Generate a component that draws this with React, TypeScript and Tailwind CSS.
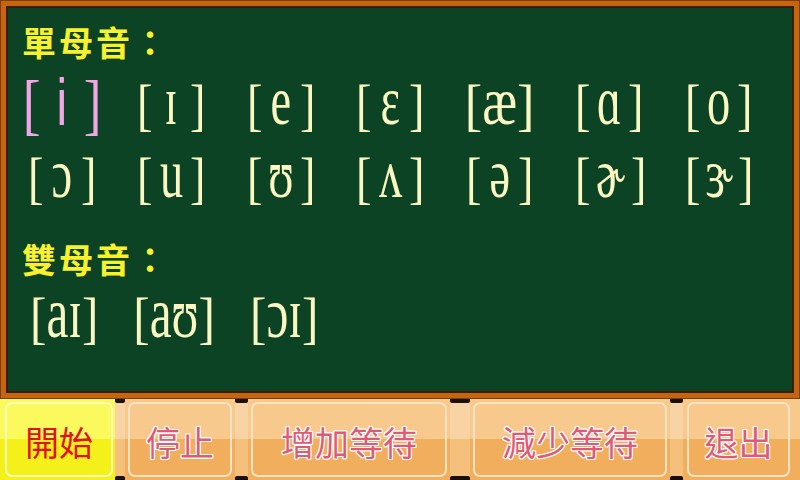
const serif = "font-['Liberation_Serif','DejaVu_Serif',serif]";

const row1 = ["ɪ", "e", "ɛ", "æ", "ɑ", "o"];
const row2 = ["ɔ", "u", "ʊ", "ʌ", "ə", "ɚ", "ɝ"];
const row3 = ["aɪ", "aʊ", "ɔɪ"];

function Sound({ ch, pink = false }: { ch: string; pink?: boolean }) {
  if (ch === "æ") {
    return (
      <div className={`w-[72px] h-[58px] flex items-center justify-center ${serif} text-[58px] leading-none text-[#fbf7c2]`}>
        <span className="scale-x-90 whitespace-nowrap">
          [<span className="inline-block scale-y-115 origin-[50%_48px]">æ</span>]
        </span>
      </div>
    );
  }
  return (
    <div
      className={`w-[72px] h-[58px] flex items-center justify-between ${serif} text-[58px] leading-none ${
        pink ? "scale-115 text-[#f2a6e6]" : "text-[#fbf7c2]"
      }`}
    >
      <span className="scale-x-80">[</span>
      <span
        className={`scale-x-80 origin-[50%_48px] ${
          pink ? "scale-y-110 font-['Liberation_Sans',sans-serif] text-[52px]" : "scale-y-120"
        }`}
      >
        {ch}
      </span>
      <span className="scale-x-80">]</span>
    </div>
  );
}

function Label({ text }: { text: string }) {
  return (
    <div className="h-[34px] text-[34px] leading-none font-bold tracking-[3px] text-[#f7f22c] font-['Noto_Sans_CJK_TC','Noto_Sans_CJK_SC',sans-serif]">
      {text}
    </div>
  );
}

function Button({ label, active = false, className }: { label: string; active?: boolean; className: string }) {
  return (
    <div
      className={`${className} h-full ${
        active
          ? "bg-[linear-gradient(#fafa5e_49%,#f4f01a_49%)]"
          : "bg-[linear-gradient(#f7c98c_49%,#f1ae5c_49%)]"
      }`}
    >
      <div
        className={`h-full rounded-[7px] border-2 flex items-center justify-center pt-[5px] text-[34px] leading-none font-['Noto_Sans_CJK_TC','Noto_Sans_CJK_SC',sans-serif] ${
          active
            ? "border-[#fdfab8] text-[#e2121c]"
            : "border-[#fde3c2] text-[#e15a74] [text-shadow:1px_0_#fff,-1px_0_#fff,0_1px_#fff,0_-1px_#fff,1px_1px_#fff,-1px_-1px_#fff,1px_-1px_#fff,-1px_1px_#fff]"
        }`}
      >
        {label}
      </div>
    </div>
  );
}

function Sep({ className }: { className: string }) {
  return (
    <div className={`${className} h-full flex flex-col justify-between bg-[linear-gradient(#f8d4a4_49%,#f4c07c_49%)]`}>
      <div className="h-[4px] bg-[#1a0f05] rounded-b-[2px]" />
      <div className="h-[4px] bg-[#1a0f05] rounded-t-[2px]" />
    </div>
  );
}

export default function App() {
  return (
    <div className="w-[800px] h-[480px] flex flex-col overflow-hidden bg-[#f6c98c]">
      <div className="h-[399px] bg-[#7d3c0b] p-px">
        <div className="h-full border-[5px] border-[#c4660f]">
          <div className="h-full border-2 border-[#3b1d06] bg-[#0c4324] pl-[14px] flex flex-col">
            <div className="mt-[17px]">
              <Label text="單母音：" />
            </div>
            <div className="mt-[17px] pl-[4px] flex">
              <div className="w-[110px]">
                <Sound ch="i" pink />
              </div>
              {row1.map((c) => (
                <div key={c} className="w-[110px]">
                  <Sound ch={c} />
                </div>
              ))}
            </div>
            <div className="mt-[15px] pl-[4px] flex">
              {row2.map((c) => (
                <div key={c} className="w-[110px]">
                  <Sound ch={c} />
                </div>
              ))}
            </div>
            <div className="mt-[35px]">
              <Label text="雙母音：" />
            </div>
            <div className="mt-[13px] pl-[6px] flex">
              {row3.map((c) => (
                <div key={c} className={`w-[110px] h-[58px] flex items-center ${serif} text-[58px] leading-none text-[#fbf7c2]`}>
                  <div className="w-[72px] flex justify-center">
                    <span className="scale-x-85 whitespace-nowrap">
                      [<span className="inline-block scale-y-125 origin-[50%_48px]">{c}</span>]
                    </span>
                  </div>
                </div>
              ))}
            </div>
          </div>
        </div>
      </div>
      <div className="h-[81px] flex">
        <Button label="開始" active className="w-[115px] py-[3px] pl-[5px] pr-[2px]" />
        <Sep className="w-[10px]" />
        <Button label="停止" className="w-[110px] p-[3px]" />
        <Sep className="w-[13px]" />
        <Button label="增加等待" className="w-[202px] p-[3px]" />
        <Sep className="w-[20px]" />
        <Button label="減少等待" className="w-[200px] p-[3px]" />
        <Sep className="w-[13px]" />
        <Button label="退出" className="flex-1 py-[3px] pl-[4px] pr-[10px]" />
      </div>
    </div>
  );
}
